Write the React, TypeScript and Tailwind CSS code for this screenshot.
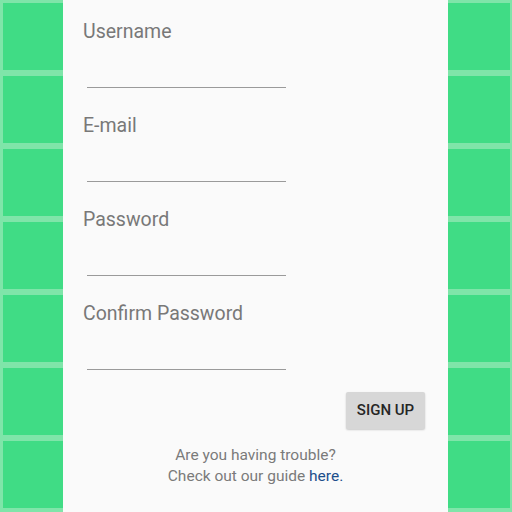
const TILES = [0, 1, 2, 3, 4, 5, 6, 7];

function TileColumn({ side }: { side: "left" | "right" }) {
  return (
    <div
      className={
        side === "left"
          ? "flex w-[63px] flex-col gap-[6px] bg-[#7fe5a9] pl-[3px] pt-[3px]"
          : "flex w-[64px] flex-col gap-[6px] bg-[#7fe5a9] pr-[2px] pt-[3px]"
      }
    >
      {TILES.map((t) => (
        <div key={t} className="h-[67px] shrink-0 bg-[#40dc85]" />
      ))}
    </div>
  );
}

function Field({ label }: { label: string }) {
  return (
    <div className="flex flex-col">
      <span className="text-[19.5px] leading-[24px] text-[#787878]">{label}</span>
      <div className="ml-1 h-[44px] w-[199px] border-b border-[#9a9a9a]" />
    </div>
  );
}

export default function App() {
  return (
    <div className="flex h-[512px] w-[512px] overflow-hidden font-['Roboto',sans-serif]">
      <TileColumn side="left" />

      <div className="flex w-[385px] flex-col bg-[#fafafa] pl-5 pr-[23px] pt-5">
        <div className="flex flex-col gap-[26px]">
          <Field label="Username" />
          <Field label="E-mail" />
          <Field label="Password" />
          <Field label="Confirm Password" />
        </div>

        <div className="mt-[22px] flex justify-end">
          <button className="h-[37px] w-[79px] rounded-[2px] bg-[#d7d7d7] text-[15px] font-medium text-[#262626] shadow-[0_1px_2px_rgba(0,0,0,0.2)]">
            SIGN UP
          </button>
        </div>

        <div className="mt-4 flex flex-col items-center pl-[3px] text-[15.5px] leading-[21px] text-[#7a7a7a]">
          <span>Are you having trouble?</span>
          <span>
            Check out our guide <span className="text-[#1d4e8b]">here.</span>
          </span>
        </div>
      </div>

      <TileColumn side="right" />
    </div>
  );
}
